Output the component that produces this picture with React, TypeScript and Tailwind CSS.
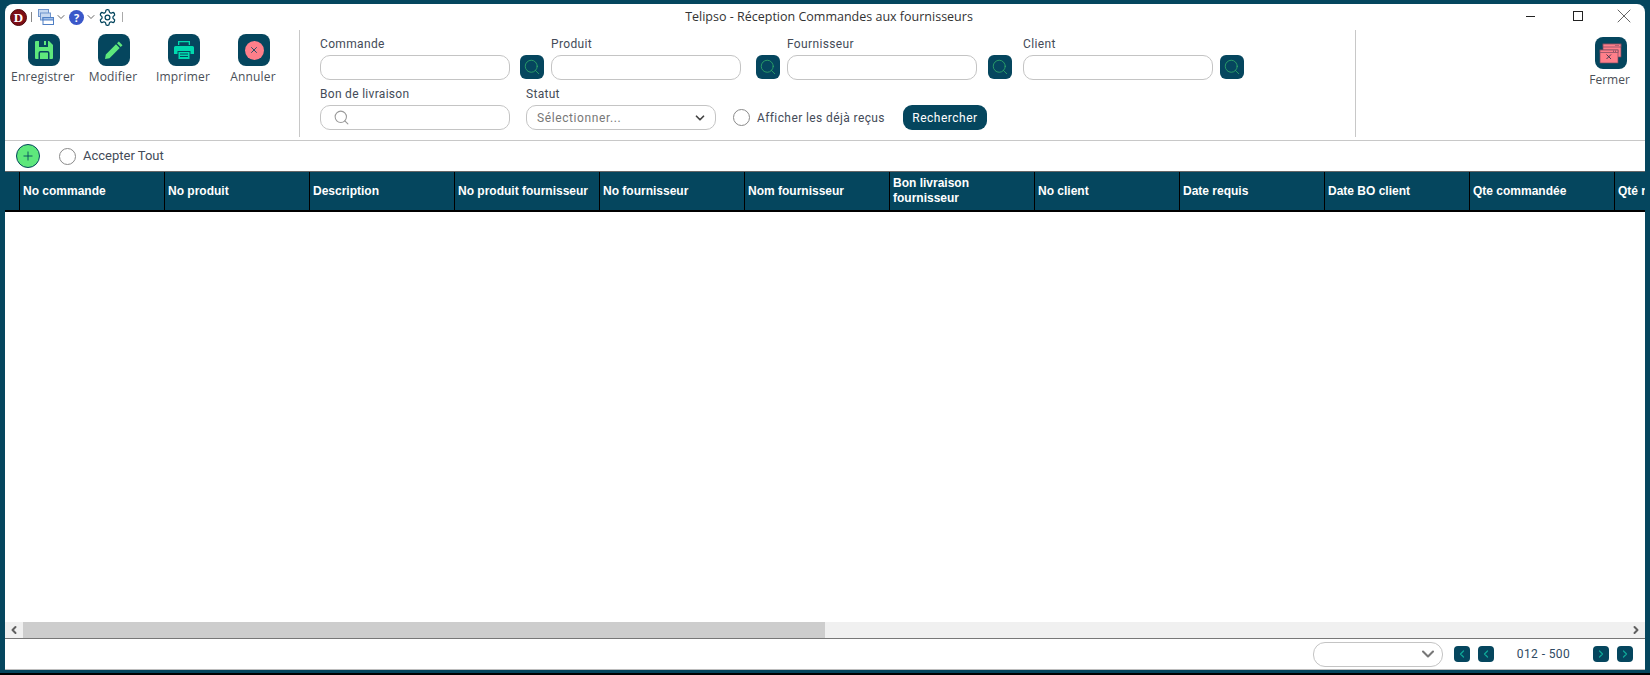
import React from "react";
import { Search, ChevronDown, ChevronLeft, ChevronRight, Plus, X } from "lucide-react";

const columns = [
  "No commande",
  "No produit",
  "Description",
  "No produit fournisseur",
  "No fournisseur",
  "Nom fournisseur",
  "Bon livraison fournisseur",
  "No client",
  "Date requis",
  "Date BO client",
  "Qte commandée",
  "Qté reçue",
];

const Radio = () => <span className="block w-[17px] h-[17px] shrink-0 rounded-full border border-[#8a8a8a] bg-white" />;

const Tile = ({ children }: { children: React.ReactNode }) => (
  <div className="w-8 h-8 rounded-lg bg-[#05465e] flex items-center justify-center">{children}</div>
);

const SaveIcon = () => (
  <svg width="18" height="18" viewBox="0 0 18 18">
    <path fillRule="evenodd" fill="#5ee87c" d="M1 0h13l4 4v13a1 1 0 0 1-1 1H1a1 1 0 0 1-1-1V1a1 1 0 0 1 1-1ZM4 0v6h9V0h-2v4H9V0ZM3.5 18v-6a2 2 0 0 1 2-2h7a2 2 0 0 1 2 2v6h-1.500v-6a.5.5 0 0 0-.5-.5h-7a.5.5 0 0 0-.5.5v6Z" />
  </svg>
);

const PencilIcon = () => (
  <svg width="18" height="18" viewBox="0 0 18 18">
    <path fill="#5ee87c" d="M13.800 0.500 17.500 4.200 15.700 6 12 2.300ZM11 3.300 14.700 7 4.500 17.200 0 18 0.800 13.500Z" />
  </svg>
);

const PrintIcon = () => (
  <svg width="20" height="18" viewBox="0 0 20 18">
    <path fillRule="evenodd" fill="#00d9ae" d="M4 0h12v4h-1.300V1.300H5.300V4H4ZM1.500 5h17A1.500 1.500 0 0 1 20 6.500V13h-3.500v-3h-13v3H0V6.500A1.500 1.500 0 0 1 1.500 5ZM4.500 11h11v7h-11ZM6 12.500v1h8v-1ZM6 15v1h8v-1Z" />
  </svg>
);

const CancelIcon = () => (
  <div className="w-[19px] h-[19px] rounded-full bg-[#ff7f8a] flex items-center justify-center">
    <X className="w-[10px] h-[10px] text-[#05465e]" strokeWidth={2} />
  </div>
);

const CloseAllIcon = () => (
  <svg width="24" height="24" viewBox="0 0 24 24">
    <rect x="4" y="3" width="18" height="13" fill="#ff7f8a" stroke="#7a4a5e" strokeWidth="0.7" />
    <rect x="4" y="3" width="18" height="3" fill="#ff7f8a" stroke="#7a4a5e" strokeWidth="0.7" />
    <rect x="1" y="9" width="18" height="13" fill="#ff7f8a" stroke="#7a4a5e" strokeWidth="0.7" />
    <rect x="1" y="9" width="18" height="2.500" fill="#ff7f8a" stroke="#7a4a5e" strokeWidth="0.7" />
    <path d="M7.500 13.500 12 18M12 13.500 7.500 18" stroke="#4a3a50" strokeWidth="1" />
    <path d="M16.500 4.500h1M18.500 4.500h1M14 10.200h1M16 10.200h1" stroke="#4a3a50" strokeWidth="0.8" />
  </svg>
);

const ActionButton = ({ icon, label }: { icon: React.ReactNode; label: string }) => (
  <div className="w-[70px] flex flex-col items-center">
    <Tile>{icon}</Tile>
    <span className="text-[12px] tracking-[0.2px] leading-[16px] mt-[3px] pr-[2px] text-[#4a4f57] whitespace-nowrap">{label}</span>
  </div>
);

const SearchField = ({ label, width }: { label: string; width: string }) => (
  <div className={`flex flex-col shrink-0 ${width}`}>
    <span className="text-[12px] tracking-[0.35px] leading-[14px] mb-[4px] text-[#444b58]">{label}</span>
    <div className="w-[190px] h-[25px] rounded-[10px] border border-[#c4c4c4] bg-white" />
  </div>
);

const SearchButton = () => (
  <div className="w-6 h-6 rounded-md bg-[#05465e] flex items-center justify-center shrink-0 mt-[18px]">
    <Search className="w-[18px] h-[18px] text-[#34b36a]" strokeWidth={1} />
  </div>
);

const PageButton = ({ next }: { next?: boolean }) => (
  <div className="w-4 h-4 rounded-[4px] bg-[#05465e] flex items-center justify-center">
    {next ? (
      <ChevronRight className="w-3 h-3 text-[#0fa898]" strokeWidth={2.5} />
    ) : (
      <ChevronLeft className="w-3 h-3 text-[#0fa898]" strokeWidth={2.5} />
    )}
  </div>
);

export default function App() {
  return (
    <div className="w-[1650px] h-[675px] bg-[#05465e] pt-[4px] px-[5px] font-['Open_Sans',sans-serif] overflow-hidden">
      <div className="h-[666px] bg-white rounded-t-lg border-b border-[#bdbdbd] flex flex-col overflow-hidden">
        {/* title bar */}
        <div className="h-6 shrink-0 flex items-center">
          <div className="w-[260px] flex items-center pl-[5px] pt-[2px]">
            <div className="w-[17px] h-[17px] rounded-full bg-[#7d0d16] border-[1.5px] border-[#4d0a0e] flex items-center justify-center text-white text-[13px] font-bold font-['Liberation_Serif',serif] leading-none">
              D
            </div>
            <span className="w-px h-[10px] bg-[#888] ml-[4px] mr-[6px]" />
            <svg width="16" height="16" viewBox="0 0 16 16">
              <rect x="0.500" y="0.500" width="10" height="7" fill="#c7d8f0" stroke="#6f94cc" />
              <rect x="2.500" y="4" width="10" height="7" fill="#c7d8f0" stroke="#6f94cc" />
              <rect x="5" y="8.500" width="10.500" height="7" fill="#fff" stroke="#4f7fc4" />
              <rect x="5" y="8.500" width="10.500" height="2.500" fill="#9fbde8" stroke="#4f7fc4" />
            </svg>
            <ChevronDown className="w-3 h-3 text-[#333] ml-[1px]" strokeWidth={1.5} />
            <div className="w-[15px] h-[15px] rounded-full bg-[#3a57c9] text-white text-[11px] font-bold flex items-center justify-center leading-none ml-[2px]">
              ?
            </div>
            <ChevronDown className="w-3 h-3 text-[#333] ml-[1px]" strokeWidth={1.5} />
            <svg width="19" height="19" viewBox="0 0 24 24" fill="none" stroke="#05465e" strokeWidth="1.600" className="ml-[1px]">
              <path d="M12.220 2h-.440a2 2 0 0 0-2 2v.180a2 2 0 0 1-1 1.730l-.430.250a2 2 0 0 1-2 0l-.150-.080a2 2 0 0 0-2.730.730l-.220.380a2 2 0 0 0 .730 2.730l.150.100a2 2 0 0 1 1 1.720v.510a2 2 0 0 1-1 1.740l-.150.090a2 2 0 0 0-.730 2.730l.220.380a2 2 0 0 0 2.730.730l.150-.080a2 2 0 0 1 2 0l.430.250a2 2 0 0 1 1 1.730V20a2 2 0 0 0 2 2h.440a2 2 0 0 0 2-2v-.180a2 2 0 0 1 1-1.730l.430-.250a2 2 0 0 1 2 0l.150.080a2 2 0 0 0 2.730-.730l.220-.390a2 2 0 0 0-.730-2.730l-.150-.080a2 2 0 0 1-1-1.740v-.500a2 2 0 0 1 1-1.740l.150-.090a2 2 0 0 0 .730-2.730l-.220-.380a2 2 0 0 0-2.730-.730l-.150.080a2 2 0 0 1-2 0l-.430-.250a2 2 0 0 1-1-1.730V4a2 2 0 0 0-2-2z" />
              <circle cx="12" cy="12" r="3" />
            </svg>
            <span className="w-px h-[10px] bg-[#aaa] ml-[5px]" />
          </div>
          <div className="flex-1 text-center text-[12.5px] text-[#333] pr-[122px] pt-[3px] whitespace-nowrap">
            Telipso - Réception Commandes aux fournisseurs
          </div>
          <div className="w-[130px] flex items-center pl-[11px] text-[#222]">
            <div className="w-[9px] h-px bg-[#222]" />
            <div className="w-[10px] h-[10px] border border-[#222] ml-[38px]" />
            <X className="w-6 h-6 ml-[29px]" strokeWidth={0.7} />
          </div>
        </div>

        {/* toolbar */}
        <div className="h-[113px] shrink-0 border-b border-[#c8c8c8] flex items-stretch pt-[2px] pb-[3px]">
          <div className="w-[295px] pl-[4px] flex pt-[4px] items-start shrink-0 border-r border-[#c8c8c8]">
            <ActionButton icon={<SaveIcon />} label="Enregistrer" />
            <ActionButton icon={<PencilIcon />} label="Modifier" />
            <ActionButton icon={<PrintIcon />} label="Imprimer" />
            <ActionButton icon={<CancelIcon />} label="Annuler" />
          </div>
          <div className="w-[1056px] pl-[20px] pt-[7px] shrink-0 border-r border-[#c8c8c8] flex flex-col gap-[7px] font-['Roboto',sans-serif]">
            <div className="flex">
              <SearchField label="Commande" width="w-[200px]" />
              <SearchButton />
              <div className="w-[7px]" />
              <SearchField label="Produit" width="w-[205px]" />
              <SearchButton />
              <div className="w-[7px]" />
              <SearchField label="Fournisseur" width="w-[201px]" />
              <SearchButton />
              <div className="w-[11px]" />
              <SearchField label="Client" width="w-[197px]" />
              <SearchButton />
            </div>
            <div className="flex items-end">
              <div className="w-[206px] shrink-0 flex flex-col">
                <span className="text-[12px] tracking-[0.3px] leading-[14px] mb-[4px] text-[#444b58]">Bon de livraison</span>
                <div className="w-[190px] h-[25px] rounded-[10px] border border-[#c4c4c4] pl-[12px] flex items-center">
                  <Search className="w-[17px] h-[17px] text-[#999]" strokeWidth={1.5} />
                </div>
              </div>
              <div className="w-[207px] shrink-0 flex flex-col">
                <span className="text-[12px] tracking-[0.3px] leading-[14px] mb-[4px] text-[#444b58]">Statut</span>
                <div className="w-[190px] h-[25px] rounded-[10px] border border-[#c4c4c4] pl-[10px] pr-[8px] flex items-center justify-between">
                  <span className="text-[12px] tracking-[0.6px] text-[#777]">Sélectionner...</span>
                  <ChevronDown className="w-[14px] h-[14px] text-[#444]" strokeWidth={3} />
                </div>
              </div>
              <div className="h-[25px] flex items-center">
                <Radio />
                <span className="ml-[7px] text-[12px] tracking-[0.4px] text-[#444b58] whitespace-nowrap">Afficher les déjà reçus</span>
              </div>
              <div className="h-[25px] w-[84px] ml-[18px] rounded-[9px] bg-[#05465e] text-white text-[12px] tracking-[0.5px] flex items-center justify-center">
                Rechercher
              </div>
            </div>
          </div>
          <div className="flex-1 flex justify-end pr-[10px] pt-[7px]">
            <div className="w-[48px] flex flex-col items-center">
              <Tile>
                <CloseAllIcon />
              </Tile>
              <span className="text-[12px] leading-[16px] mt-[3px] pr-[3px] text-[#4a4f57]">Fermer</span>
            </div>
          </div>
        </div>

        {/* accept row */}
        <div className="h-[30px] shrink-0 flex items-center pl-[11px]">
          <div className="w-6 h-6 rounded-full bg-[#5ee87c] border border-[#05465e] flex items-center justify-center">
            <Plus className="w-[14px] h-[14px] text-[#05465e]" strokeWidth={1.5} />
          </div>
          <div className="ml-[19px]">
            <Radio />
          </div>
          <span className="ml-[7px] text-[13px] text-[#444b58] font-['Roboto',sans-serif]">Accepter Tout</span>
        </div>

        {/* table */}
        <div className="flex h-[41px] shrink-0 bg-[#05465e] border-t border-[#666] border-b-2 border-b-black overflow-hidden font-['Liberation_Sans',sans-serif] text-[12px] font-bold text-white">
          <div className="w-[15px] shrink-0 border-r border-black" />
          {columns.map((c) => (
            <div key={c} className="w-[145px] shrink-0 border-r border-black pl-[3px] pr-[6px] flex items-center leading-[15px]">
              {c}
            </div>
          ))}
        </div>
        <div className="flex-1" />
        <div className="h-4 shrink-0 bg-[#f0f0f0] flex items-center">
          <div className="w-[18px] flex justify-center">
            <ChevronLeft className="w-3 h-3 text-[#606060]" strokeWidth={4} />
          </div>
          <div className="w-[802px] h-full bg-[#cdcdcd]" />
          <div className="flex-1 flex justify-end pr-[3px]">
            <ChevronRight className="w-3 h-3 text-[#606060]" strokeWidth={4} />
          </div>
        </div>

        {/* footer */}
        <div className="h-[31px] shrink-0 border-t border-[#777] flex items-center justify-end pr-[12px]">
          <div className="w-[130px] h-[25px] rounded-[12px] border border-[#c4c4c4] flex items-center justify-end pr-[4px]">
            <ChevronDown className="w-5 h-5 text-[#777]" strokeWidth={2.5} />
          </div>
          <div className="flex gap-2 ml-[11px]">
            <PageButton />
            <PageButton />
          </div>
          <span className="w-[99px] text-center text-[12px] text-[#2f4a62] font-['Roboto',sans-serif] tracking-[0.4px]">012 - 500</span>
          <div className="flex gap-2">
            <PageButton next />
            <PageButton next />
          </div>
        </div>
      </div>
      <div className="h-[2px] -mx-[5px] mt-[3px] bg-black" />
    </div>
  );
}
